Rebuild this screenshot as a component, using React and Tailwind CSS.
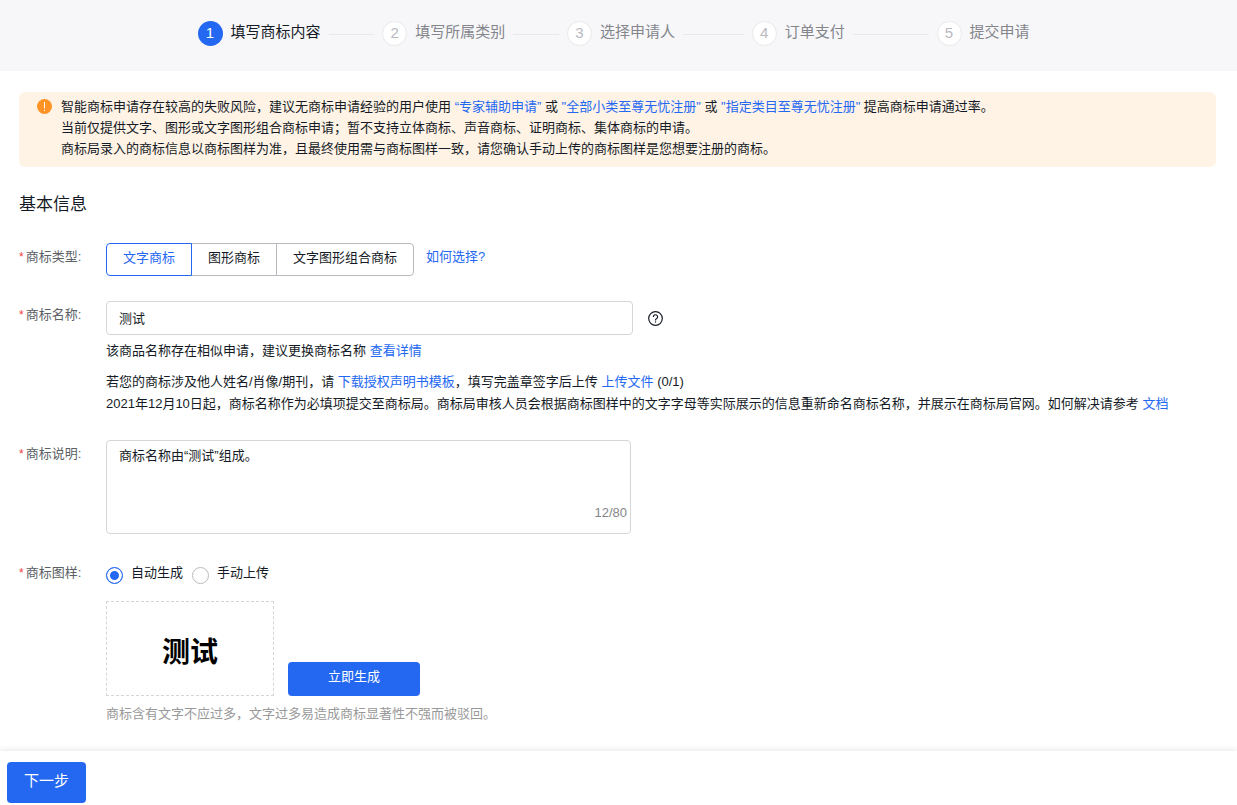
import { useState } from 'react';

const steps = ['填写商标内容', '填写所属类别', '选择申请人', '订单支付', '提交申请'];
const markTypes = ['文字商标', '图形商标', '文字图形组合商标'];

function Link({ children }) {
  return (
    <a href="#" className="text-[#2468f2] hover:underline">
      {children}
    </a>
  );
}

function Stepper() {
  return (
    <header className="flex h-[71px] justify-center bg-[#f7f7f9] pt-5 pr-2.5">
      <ol className="flex w-full max-w-[832px] items-start">
        {steps.map((step, i) => {
          const active = i === 0;
          const last = i === steps.length - 1;
          return (
            <li
              key={step}
              aria-current={active ? 'step' : undefined}
              className={last ? 'flex items-center' : 'flex flex-1 items-center'}
            >
              <span
                className={
                  active
                    ? 'flex size-[25px] shrink-0 items-center justify-center rounded-full bg-[#2468f2] text-[15px] text-white'
                    : 'flex size-[25px] shrink-0 items-center justify-center rounded-full border border-[#e8e9eb] bg-white text-[15px] text-[#b8babf]'
                }
              >
                {i + 1}
              </span>
              <span
                className={
                  active
                    ? 'ml-2 pb-0.5 text-[15px] leading-6 whitespace-nowrap text-[#151b26]'
                    : 'ml-2 pb-0.5 text-[15px] leading-6 whitespace-nowrap text-[#84868c]'
                }
              >
                {step}
              </span>
              {!last && <span className="mx-2 mt-0.5 h-px flex-1 bg-[#e8e9eb]" />}
            </li>
          );
        })}
      </ol>
    </header>
  );
}

function Notice() {
  return (
    <div className="flex gap-[9px] rounded-md bg-[#fff3e6] pt-1 pr-4 pb-2 pl-[18px] leading-[21px]">
      <svg viewBox="0 0 15 15" className="mt-[3px] size-[15px] shrink-0" aria-hidden="true">
        <circle cx="7.5" cy="7.5" r="7.5" fill="#ff9326" />
        <rect x="7" y="3" width="1" height="6.4" fill="#fff" />
        <rect x="7" y="10.8" width="1" height="1.2" fill="#fff" />
      </svg>
      <div>
        <p>
          智能商标申请存在较高的失败风险，建议无商标申请经验的用户使用 <Link>“专家辅助申请”</Link> 或{' '}
          <Link>"全部小类至尊无忧注册"</Link> 或 <Link>"指定类目至尊无忧注册"</Link> 提高商标申请通过率。
        </p>
        <p>当前仅提供文字、图形或文字图形组合商标申请；暂不支持立体商标、声音商标、证明商标、集体商标的申请。</p>
        <p>商标局录入的商标信息以商标图样为准，且最终使用需与商标图样一致，请您确认手动上传的商标图样是您想要注册的商标。</p>
      </div>
    </div>
  );
}

function Row({ label, htmlFor, id, children }) {
  const Tag = htmlFor ? 'label' : 'span';
  return (
    <div className="flex">
      <Tag
        id={id}
        htmlFor={htmlFor}
        className="flex w-[87px] shrink-0 gap-0.5 leading-7 whitespace-nowrap text-[#5c5f66]"
      >
        <span className="text-xs leading-7 text-[#f33e3e]">*</span>
        {label}:
      </Tag>
      <div className="min-w-0 flex-1">{children}</div>
    </div>
  );
}

function Radio({ label, checked, onChange }) {
  return (
    <label className="flex gap-2 leading-7">
      <input
        type="radio"
        name="pattern"
        checked={checked}
        onChange={onChange}
        className="mt-2 size-[17px] appearance-none rounded-full border border-[#b8babf] bg-white checked:border-[#2468f2] checked:bg-[#2468f2] checked:shadow-[inset_0_0_0_3px_white]"
      />
      {label}
    </label>
  );
}

export default function App() {
  const [type, setType] = useState(0);
  const [name, setName] = useState('测试');
  const [desc, setDesc] = useState('商标名称由“测试”组成。');
  const [auto, setAuto] = useState(true);

  return (
    <div className="bg-white font-['Liberation_Sans','Noto_Sans_CJK_SC',sans-serif] text-[13px] text-[#151b26]">
      <Stepper />
      <main className="pt-[21px] pr-[21px] pb-[26px] pl-[19px]">
        <Notice />
        <h2 className="mt-[26px] text-[17px] leading-6">基本信息</h2>

        <form className="mt-[26px] flex flex-col gap-[25px]" onSubmit={(e) => e.preventDefault()}>
          <Row label="商标类型" id="type-label">
            <div className="flex">
              <div role="group" aria-labelledby="type-label" className="flex">
                {markTypes.map((t, i) => (
                  <button
                    key={t}
                    type="button"
                    aria-pressed={type === i}
                    onClick={() => setType(i)}
                    className={
                      type === i
                        ? 'relative z-10 -ml-px h-[33px] border border-[#2468f2] px-4 pb-1 text-[#2468f2] first:ml-0 first:rounded-l last:rounded-r'
                        : '-ml-px h-[33px] border border-[#b8babf] px-4 pb-1 first:ml-0 first:rounded-l last:rounded-r'
                    }
                  >
                    {t}
                  </button>
                ))}
              </div>
              <div className="ml-3 leading-7">
                <Link>如何选择?</Link>
              </div>
            </div>
          </Row>

          <Row label="商标名称" htmlFor="mark-name">
            <div className="flex items-center gap-[15px]">
              <input
                id="mark-name"
                type="text"
                value={name}
                onChange={(e) => setName(e.target.value)}
                className="h-[34px] w-full max-w-[527px] rounded border border-[#d4d6d9] px-3 pb-0.5 outline-none focus:border-[#2468f2]"
              />
              <button type="button" aria-label="帮助">
                <svg viewBox="0 0 15 15" className="size-[15px]" fill="none" stroke="#151b26" strokeWidth="1.2">
                  <circle cx="7.5" cy="7.5" r="6.8" />
                  <path d="M5.4 5.9a2.1 2.1 0 1 1 3.3 1.7c-.8.5-1.2.9-1.2 1.8" />
                  <path d="M7.5 10.4v1.2" />
                </svg>
              </button>
            </div>
            <p className="mt-[5px] leading-[22px]">
              该商品名称存在相似申请，建议更换商标名称 <Link>查看详情</Link>
            </p>
            <p className="mt-[9px] leading-[22px]">
              若您的商标涉及他人姓名/肖像/期刊，请 <Link>下载授权声明书模板</Link>，填写完盖章签字后上传{' '}
              <Link>上传文件</Link> (0/1)
            </p>
            <p className="leading-[22px]">
              2021年12月10日起，商标名称作为必填项提交至商标局。商标局审核人员会根据商标图样中的文字字母等实际展示的信息重新命名商标名称，并展示在商标局官网。如何解决请参考{' '}
              <Link>文档</Link>
            </p>
          </Row>

          <Row label="商标说明" htmlFor="mark-desc">
            <div className="relative max-w-[525px]">
              <textarea
                id="mark-desc"
                value={desc}
                maxLength={80}
                onChange={(e) => setDesc(e.target.value)}
                className="block h-[94px] w-full resize-none rounded border border-[#d4d6d9] px-3 py-1 leading-[22px] outline-none focus:border-[#2468f2]"
              />
              <span className="absolute right-1 bottom-2.5 leading-[22px] text-[#84868c]">{desc.length}/80</span>
            </div>
          </Row>

          <Row label="商标图样" id="pattern-label">
            <div role="radiogroup" aria-labelledby="pattern-label" className="flex gap-[9px]">
              <Radio label="自动生成" checked={auto} onChange={() => setAuto(true)} />
              <Radio label="手动上传" checked={!auto} onChange={() => setAuto(false)} />
            </div>
            <div className="mt-3.5 flex items-end gap-3.5">
              <div className="flex h-[95px] w-[168px] items-center justify-center border border-dashed border-[#d4d6d9] pt-2 text-[28px] font-bold text-black">
                {name}
              </div>
              <button type="button" className="h-[34px] w-[132px] rounded bg-[#2468f2] pb-1 text-white">
                立即生成
              </button>
            </div>
            <p className="mt-[7px] leading-[22px] text-[#999]">
              商标含有文字不应过多，文字过多易造成商标显著性不强而被驳回。
            </p>
          </Row>
        </form>
      </main>
      <footer className="px-[7px] pt-[11px] pb-0.5 shadow-[0_-1px_6px_rgba(0,0,0,0.1)]">
        <button type="button" className="h-[41px] rounded bg-[#2468f2] px-[17px] pb-0.5 text-[15px] text-white">
          下一步
        </button>
      </footer>
    </div>
  );
}
